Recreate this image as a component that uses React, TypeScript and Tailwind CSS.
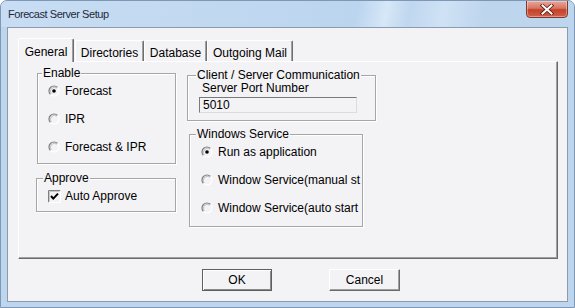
import React from 'react';

function Radio({ checked = false }: { checked?: boolean }) {
  return (
    <svg width="12" height="12" viewBox="0 0 12 12" className="shrink-0">
      <circle cx="6" cy="6" r="5" fill="#f3f2f5" />
      <path d="M9.54 2.46 A5 5 0 0 0 2.46 9.54" fill="none" stroke="#7d7d7d" strokeWidth="1.2" />
      <path d="M8.8 3.2 A4 4 0 0 0 3.2 8.8" fill="none" stroke="#b4b4b4" strokeWidth="0.8" />
      <path d="M2.46 9.54 A5 5 0 0 0 9.54 2.46" fill="none" stroke="#ffffff" strokeWidth="1.2" />
      {checked && <circle cx="6" cy="6" r="1.8" fill="#000" />}
    </svg>
  );
}

function CheckBox({ checked = false }: { checked?: boolean }) {
  return (
    <svg width="13" height="13" viewBox="0 0 13 13" className="shrink-0">
      <rect x="0" y="0" width="13" height="13" fill="#f3f2f5" />
      <path d="M0.5 12.5 V0.5 H12.5" fill="none" stroke="#808080" strokeWidth="1" />
      <path d="M1.5 11.5 V1.5 H11.5" fill="none" stroke="#c8c8c8" strokeWidth="1" />
      <path d="M0.5 12.5 H12.5 V0.5" fill="none" stroke="#ffffff" strokeWidth="1" />
      {checked && (
        <path d="M3 6 L5.3 8.6 L10 3.6" fill="none" stroke="#000" strokeWidth="2" />
      )}
    </svg>
  );
}

function GroupBox({
  label,
  legendClass,
  className,
  children,
}: {
  label: string;
  legendClass: string;
  className: string;
  children: React.ReactNode;
}) {
  return (
    <fieldset
      className={`border border-[#a6a6a6] shadow-[1px_1px_0_#ffffff,inset_1px_1px_0_#ffffff] ${className}`}
    >
      <legend className={`px-[1px] leading-[14px] bg-[#f3f2f5] ${legendClass}`}>{label}</legend>
      {children}
    </fieldset>
  );
}

function Option({ label, checked }: { label: string; checked?: boolean }) {
  return (
    <div className="h-[14px] flex items-center gap-[5px] whitespace-nowrap">
      <Radio checked={checked} />
      <span>{label}</span>
    </div>
  );
}

const tabs = ['General', 'Directories', 'Database', 'Outgoing Mail'];

export default function App() {
  return (
    <div className="w-[575px] h-[308px] flex flex-col border border-[#7d97b5] rounded-t-[7px] bg-[#bed5ee] font-['Liberation_Sans',Arial,sans-serif] text-[12px] text-black overflow-hidden">
      {/* Title bar */}
      <div className="h-[26px] flex justify-between bg-[linear-gradient(100deg,#c8ddf3_0%,#bcd5ef_62%,#d6e7f7_67%,#c0d7ef_71%,#cfe2f5_77%,#bed5ee_84%,#bed5ee_100%)]">
        <span className="self-center pl-[7px] text-[11px] tracking-[-0.45px] text-[#1e2a3a]">
          Forecast Server Setup
        </span>
        <button className="w-[42px] h-[18px] -mt-[1px] mr-[6px] rounded-b-[4px] border border-[#84382c] bg-[linear-gradient(to_bottom,#e9a799_0%,#d77562_45%,#c2412a_55%,#d0604a_100%)] flex items-center justify-center shadow-[inset_0_0_0_1px_rgba(255,255,255,0.35)]">
          <svg width="14" height="11" viewBox="0 0 14 11">
            <path d="M2.5 1.5 L11.5 9.5 M11.5 1.5 L2.5 9.5" stroke="#5a1a10" strokeWidth="3.6" strokeLinecap="square" />
            <path d="M2.5 1.5 L11.5 9.5 M11.5 1.5 L2.5 9.5" stroke="#ffffff" strokeWidth="2" strokeLinecap="square" />
          </svg>
        </button>
      </div>

      {/* Client area */}
      <div className="mx-[6px] h-[275px] border border-[#8b9aad] bg-[#f3f2f5] pt-[10px] pl-[10px]">
        {/* Tab strip */}
        <div className="h-[23px] flex items-end">
          {tabs.map((t, i) =>
            i === 0 ? (
              <div
                key={t}
                className="relative z-10 h-[24px] -mb-[1px] w-[56px] border-l border-t border-r border-l-white border-t-white border-r-[#6f6f6f] rounded-t-[2px] bg-[#f3f2f5] flex items-start justify-center pt-[4px] shadow-[inset_-1px_0_0_#a0a0a0]"
              >
                {t}
              </div>
            ) : (
              <div
                key={t}
                className={`h-[21px] border-l border-t border-r border-l-white border-t-white border-r-[#6f6f6f] rounded-t-[2px] flex items-start justify-center pt-[3px] shadow-[inset_-1px_0_0_#a0a0a0] ${
                  i === 1 ? 'w-[69px] ml-[1px]' : i === 2 ? 'w-[63px]' : 'w-[86px]'
                }`}
              >
                {t}
              </div>
            )
          )}
        </div>

        {/* Tab panel */}
        <div className="w-[540px] h-[198px] border border-t-white border-l-white border-r-[#6a6a6a] border-b-[#6a6a6a] shadow-[inset_-1px_-1px_0_#a0a0a0] flex pt-[4px] pl-[18px] gap-[11px]">
          <div className="flex flex-col">
            <GroupBox label="Enable" legendClass="ml-[4px]" className="w-[139px] h-[98px]">
              <div className="pt-[4px] pl-[10px] flex flex-col gap-[14px]">
                <Option label="Forecast" checked />
                <Option label="IPR" />
                <Option label="Forecast & IPR" />
              </div>
            </GroupBox>
            <GroupBox label="Approve" legendClass="ml-[6px]" className="w-[140px] h-[41px] mt-[7px] -ml-[1px]">
              <div className="pt-[4px] pl-[11px] h-[18px] flex items-center gap-[4px]">
                <CheckBox checked />
                <span>Auto Approve</span>
              </div>
            </GroupBox>
          </div>

          <div className="flex flex-col">
            <GroupBox
              label="Client / Server Communication"
              legendClass="ml-[8px] whitespace-nowrap"
              className="w-[189px] h-[53px] mt-[2px]"
            >
              <div className="-mt-[1px] pl-[11px]">
                <div className="pl-[3px] leading-[14px]">Server Port Number</div>
                <div className="mt-[2px] w-[158px] h-[16px] border border-t-[#7a7a7a] border-l-[#7a7a7a] border-r-[#dcdcdc] border-b-[#dcdcdc] pl-[3px] leading-[14px]">
                  5010
                </div>
              </div>
            </GroupBox>
            <GroupBox
              label="Windows Service"
              legendClass="ml-[6px] whitespace-nowrap"
              className="w-[174px] h-[100px] mt-[6px] ml-[2px]"
            >
              <div className="pt-[4px] pl-[11px] flex flex-col gap-[14px]">
                <Option label="Run as application" checked />
                <Option label="Window Service(manual st" />
                <Option label="Window Service(auto start" />
              </div>
            </GroupBox>
          </div>
        </div>

        {/* Buttons */}
        <div className="mt-[10px] flex pl-[184px] gap-[57px]">
          <button className="w-[70px] h-[22px] border border-[#5f5f5f] bg-[#f3f2f5] shadow-[inset_1px_1px_0_#ffffff,inset_-1px_-1px_0_#8a8a8a] leading-[18px]">
            OK
          </button>
          <button className="w-[71px] h-[22px] border border-t-white border-l-white border-r-[#6a6a6a] border-b-[#6a6a6a] bg-[#f3f2f5] shadow-[inset_-1px_-1px_0_#a0a0a0] leading-[18px]">
            Cancel
          </button>
        </div>
      </div>
    </div>
  );
}
